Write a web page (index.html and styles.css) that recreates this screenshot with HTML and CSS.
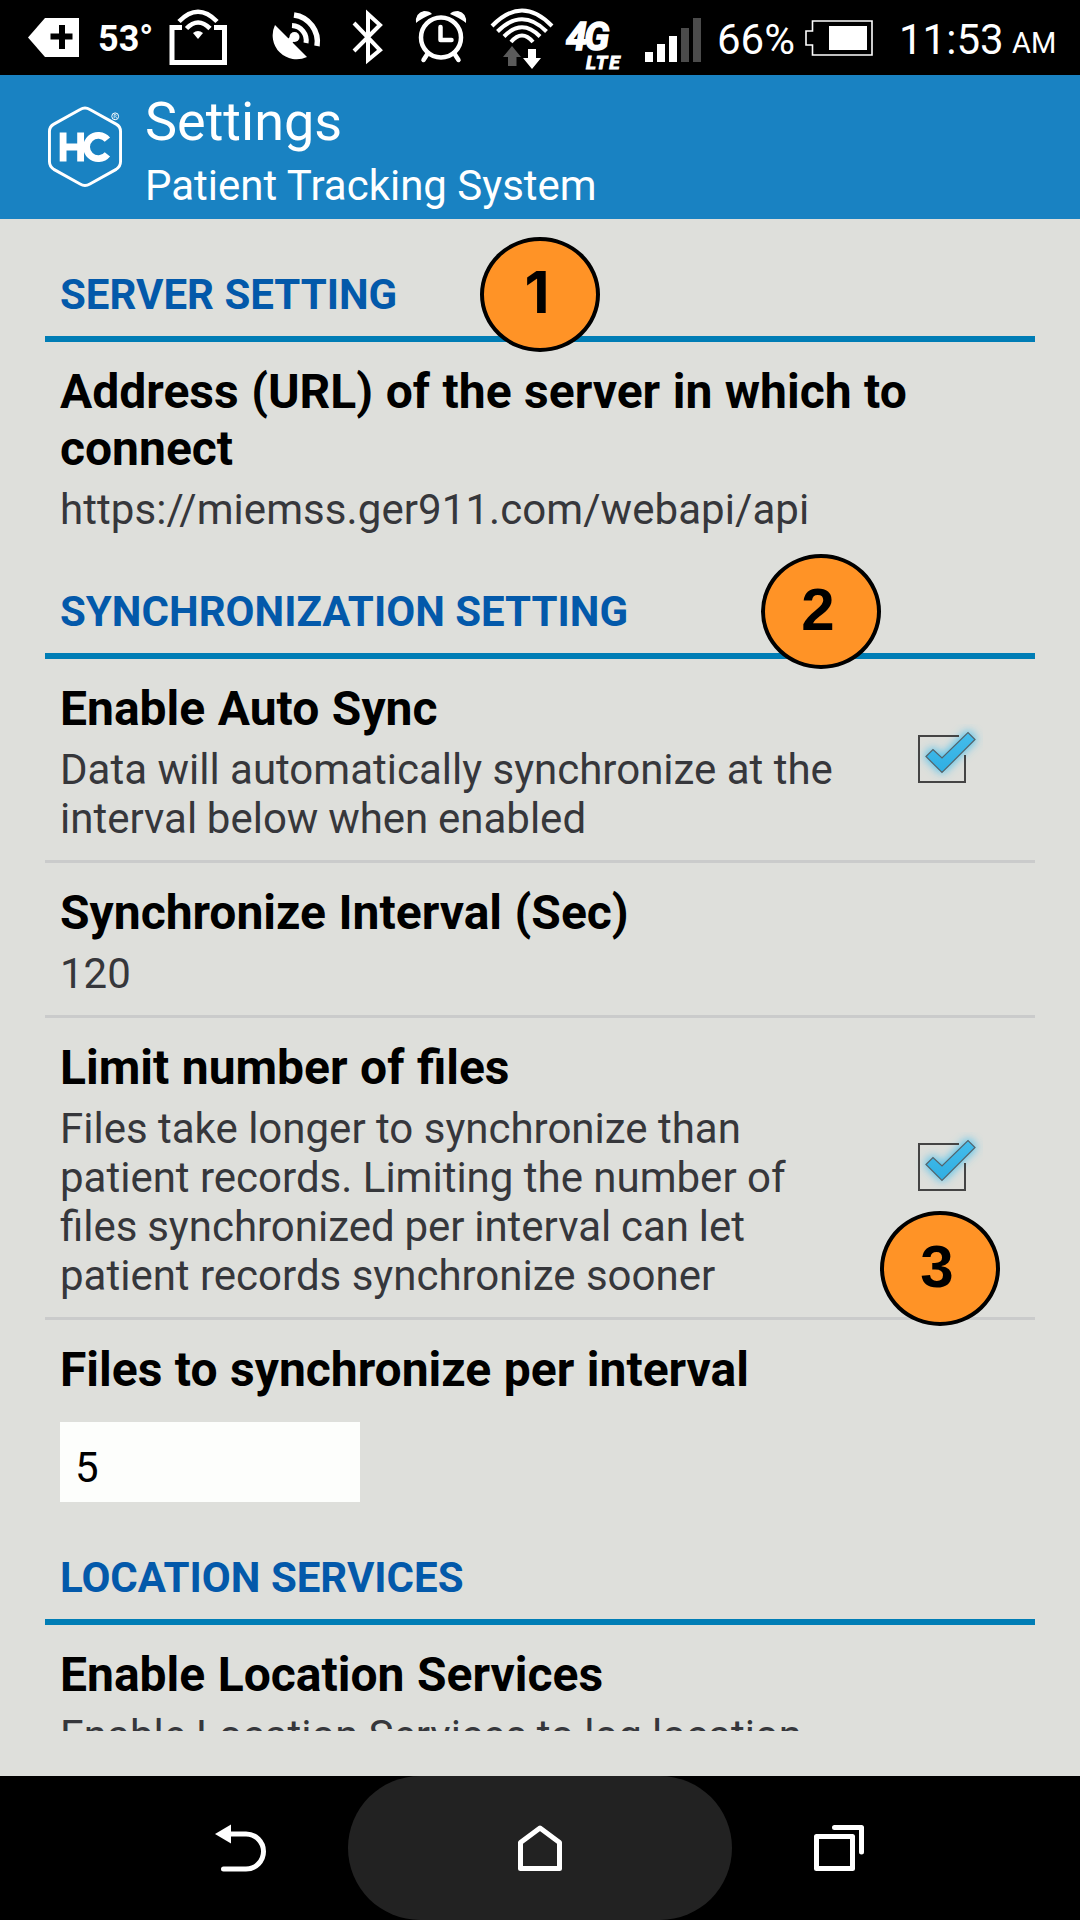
FILE: index.html
```html
<!DOCTYPE html>
<html lang="en">
<head>
<meta charset="utf-8">
<title>Settings</title>
<link rel="stylesheet" href="styles.css">
</head>
<body>
<div class="screen">
  <header class="status">
    <svg class="i-back" width="51" height="39" viewBox="0 0 51 39"><path d="M0 19.500 17 0H51V39H17Z" fill="#fff"/><path d="M34 7v24M22.500 18.500h22" stroke="#000" stroke-width="6"/></svg>
    <span class="temp">53°</span>
    <svg class="i-cast" width="60" height="60" viewBox="0 0 60 60" fill="none" stroke="#fff"><path d="M14 20.500H4V55.500H56.500V20.500H46" stroke-width="5"/><path d="M11 14.500Q30 -5 49 14.500M18.500 21.500Q30 9.500 42 21.500" stroke-width="4.600"/><path d="M25 26Q30 22 35 26L30 32Z" fill="#fff" stroke="none"/></svg>
    <svg class="i-sat" width="50" height="50" viewBox="0 0 50 50" fill="none" stroke="#fff"><path d="M3 14 35 46A24 24 0 0 1 3 14Z" fill="#fff" stroke="none"/><path d="M17 31 22 26" stroke-width="6"/><circle cx="22.500" cy="26" r="5" fill="#fff" stroke="none"/><path d="M20 14.500A15 15 0 0 1 34 32" stroke-width="5"/><path d="M22 4A27 27 0 0 1 45 35" stroke-width="5.500"/></svg>
    <svg class="i-bt" width="32" height="56" viewBox="0 0 32 56" fill="none" stroke="#fff" stroke-width="4"><path d="M2 14 28 41 16 51V5L28 16 2 42"/></svg>
    <svg class="i-alarm" width="52" height="54" viewBox="0 0 52 54" fill="none" stroke="#fff"><circle cx="26" cy="27.500" r="20" stroke-width="4.500"/><path d="M25.500 17v13h11" stroke-width="4.500" stroke-linecap="round" stroke-linejoin="round"/><path d="M13 43 8.500 50M39 43 43.500 50" stroke-width="4.500" stroke-linecap="round"/><path d="M1 13Q0 3 9 1Q15 1 17 4Q7 8 1 13ZM51 13Q52 3 43 1Q37 1 35 4Q45 8 51 13Z" fill="#fff" stroke="none"/></svg>
    <svg class="i-wifi" width="64" height="62" viewBox="0 0 64 62" fill="none" stroke="#fff" stroke-width="4"><path d="M2 18Q32 -13 62 18M7.500 23.500Q32 -1 56.500 23.500M14 28.500Q32 10 50 28.500M21 34Q32 21 43 34"/><path d="M22 38 31 49H26.500V58H18V49H13Z" fill="#5a5a5a" stroke="none"/><path d="M38 41h8v9h5L42 61 33 50h5Z" fill="#fff" stroke="none"/></svg>
    <div class="net"><span class="g4">4G</span><span class="lte">LTE</span></div>
    <svg class="i-signal" width="56" height="44" viewBox="0 0 56 44" fill="#fff"><path d="M0 34h8v10H0zM12 26h8v18h-8zM24 18h8v26h-8z"/><path d="M36 10h8v34h-8zM48 0h8v44h-8z" fill="#4b4b4b"/></svg>
    <span class="pct">66%</span>
    <svg class="i-batt" width="68" height="36" viewBox="0 0 68 36"><path d="M7.500 1H67V35H7.500V25H1V11H7.500Z" fill="none" stroke="#fff" stroke-width="1.600"/><path d="M24 6h38v24H24z" fill="#fff"/></svg>
    <span class="time">11:53</span><span class="ampm">AM</span>
  </header>

  <div class="appbar">
    <div class="logo">
      <svg width="74" height="82" viewBox="0 0 76 84" fill="none" stroke="#fff" stroke-width="3"><path d="M33 3.500Q38 .500 43 3.500L70 18.500Q74.500 21 74.500 26V57Q74.500 62 70 65L43 80Q38 83 33 80L6 65Q1.500 62 1.500 57V26Q1.500 21 6 18.500Z"/><circle cx="69" cy="10.500" r="3.500" stroke-width="1"/><path d="M68 12.500v-4h1.500q1 1 0 2l1 2" stroke-width=".8"/><path d="M15.500 27V57M33.500 27V57M16 42H34" stroke-width="7"/><path d="M61 34.500A12 12 0 1 0 61 49.500" stroke-width="7"/></svg>
    </div>
    <div class="heads"><h1>Settings</h1><p>Patient Tracking System</p></div>
  </div>

  <main class="content">
    <section>
      <h2>SERVER SETTING<span class="pin pin1"><b>1</b></span></h2>
      <div class="pref server"><h3>Address (URL) of the server in which to connect</h3><p class="url">https://miemss.ger911.com/webapi/api</p></div>
    </section>
    <section>
      <h2>SYNCHRONIZATION SETTING<span class="pin pin2"><b>2</b></span></h2>
      <div class="pref auto row">
        <div class="copy"><h3>Enable Auto Sync</h3><p>Data will automatically synchronize at the<br><span class="tight">interval below when enabled</span></p></div>
        <svg class="check" width="72" height="72" viewBox="0 0 72 72"><defs><filter id="glow" x="-60%" y="-60%" width="220%" height="220%"><feGaussianBlur stdDeviation="5"/></filter><linearGradient id="blue" x2="0" y2="1"><stop stop-color="#45bdec"/><stop offset="1" stop-color="#2faee2"/></linearGradient></defs><path d="M15 32 22 25 31 34 57 8 64 15 31 48Z" fill="#45c0ee" stroke="#45c0ee" stroke-width="3" filter="url(#glow)"/><path d="M48 12H8V58H54V31" fill="none" stroke="#444" stroke-width="2"/><path d="M15 32.500 22 25.500 31 34 57 8.500 64 15.500 31 48.500Z" fill="url(#blue)" stroke="#55636a" stroke-width="1.200"/></svg>
      </div>
      <div class="pref interval"><h3>Synchronize Interval (Sec)</h3><p>120</p></div>
      <div class="pref limit row">
        <div class="copy"><h3>Limit number of files</h3><p>Files take longer to synchronize than<br>patient records. Limiting the number of<br><span class="tight">files synchronized per interval can let</span><br>patient records synchronize sooner</p></div>
        <svg class="check" width="72" height="72" viewBox="0 0 72 72"><path d="M15 32 22 25 31 34 57 8 64 15 31 48Z" fill="#45c0ee" stroke="#45c0ee" stroke-width="3" filter="url(#glow)"/><path d="M48 12H8V58H54V31" fill="none" stroke="#444" stroke-width="2"/><path d="M15 32.500 22 25.500 31 34 57 8.500 64 15.500 31 48.500Z" fill="url(#blue)" stroke="#55636a" stroke-width="1.200"/></svg>
        <span class="pin pin3"><b>3</b></span>
      </div>
      <div class="pref files"><h3>Files to synchronize per interval</h3><div class="field">5</div></div>
    </section>
    <section>
      <h2>LOCATION SERVICES</h2>
      <div class="pref location"><h3>Enable Location Services</h3><p>Enable Location Services to log location</p></div>
    </section>
  </main>

  <nav class="nav">
    <div class="key back"><svg width="52" height="48" viewBox="0 0 52 48" fill="none" stroke="#fff" stroke-width="5" stroke-linecap="round"><path d="M14 10H31A17.500 17.500 0 0 1 31 45H8.500"/><path d="M0 10 16 .500V19.500Z" fill="#fff" stroke="none"/></svg></div>
    <div class="key home"><svg width="44" height="48" viewBox="0 0 44 48" fill="none" stroke="#fff" stroke-width="5" stroke-linejoin="round"><path d="M2.500 18.500 22 4 41.500 18.500V44.500H2.500Z"/></svg></div>
    <div class="key recent"><svg width="50" height="48" viewBox="0 0 50 48" fill="none" stroke="#fff" stroke-width="5" stroke-linejoin="round" stroke-linecap="round"><path d="M2.500 12.500H38.500V44.500H2.500ZM20.500 3.500H47.500V28"/></svg></div>
  </nav>
</div>
</body>
</html>
```
FILE: styles.css
```css
* { box-sizing: border-box; margin: 0; padding: 0; }
body { background: #000; font-family: Roboto, sans-serif; }
svg { display: block; flex: none; }
.screen { width: 1080px; height: 1920px; display: flex; flex-direction: column; overflow: hidden; }

.status { height: 75px; flex: none; display: flex; align-items: flex-start; background: #000; color: #fff; white-space: nowrap; }
.status > * { flex: none; }
.i-back { margin: 18px 0 0 28px; }
.temp { width: 70px; margin: 16px 0 0 19px; font-weight: 700; font-size: 36px; line-height: 46px; }
.i-cast { margin-top: 7px; }
.i-sat { margin: 11px 0 0 44px; }
.i-bt { margin: 9px 0 0 30px; }
.i-alarm { margin: 10px 0 0 31px; }
.i-wifi { margin: 8px 0 0 23px; }
.net { width: 62px; margin: 20px 0 0 12px; display: flex; flex-direction: column; font-weight: 700; font-style: italic; -webkit-text-stroke: 1.5px #fff; }
.g4 { font-size: 38px; line-height: 35px; letter-spacing: -3px; }
.lte { margin: -2px 0 0 20px; font-size: 19px; line-height: 19px; letter-spacing: 2px; -webkit-text-stroke-width: 1px; }
.i-signal { margin: 18px 0 0 17px; }
.pct { width: 88px; margin: 15px 0 0 16px; font-size: 42px; line-height: 50px; }
.i-batt { margin-top: 20px; }
.time { width: 113px; margin: 15px 0 0 26px; font-size: 42px; line-height: 50px; }
.ampm { margin-top: 25px; font-size: 29px; line-height: 36px; }

.appbar { height: 144px; flex: none; display: flex; background: #1982c2; color: #fff; }
.logo { margin: 31px 23px 0 48px; }
.heads h1 { font-weight: 400; font-size: 54px; line-height: 64px; margin-top: 15px; }
.heads p { font-size: 42px; line-height: 50px; margin-top: 7px; }

.content { height: 1557px; flex: none; padding: 0 45px; background: #dedfdb; overflow: hidden; }
h2 { position: relative; height: 123px; padding: 51px 15px 0; border-bottom: 6px solid #007db5; color: #0359aa; font-size: 42px; line-height: 49px; font-weight: 700; }
.pref { padding: 21px 15px 0; }
.pref h3 { font-size: 48px; line-height: 57px; font-weight: 700; color: #000; word-spacing: .6px; }
.pref p { margin-top: 8px; font-size: 42px; line-height: 49px; color: #36373b; white-space: nowrap; }
.pref .url { letter-spacing: .07px; }
.tight { word-spacing: -.7px; }
.server { height: 194px; }
.row { display: flex; position: relative; }
.copy { width: 802px; flex: none; }
.auto { height: 204px; border-bottom: 3px solid #cacbcb; }
.interval { height: 155px; border-bottom: 3px solid #cacbcb; }
.limit { height: 302px; border-bottom: 3px solid #cacbcb; }
.check { margin: 44px 0 0 49px; }
.limit .check { margin-top: 93px; }
.files { height: 182px; }
.field { width: 300px; height: 80px; margin-top: 24px; padding: 21px 15px 0; background: #fdfefc; color: #000; font-size: 42px; line-height: 49px; }
.location { height: 106px; overflow: hidden; }
.location p { word-spacing: -.4px; }

/* Numbered callouts sit over the list */
.pin { position: absolute; z-index: 1; width: 120px; height: 115px; border: 4px solid #000; border-radius: 50%; background: #ff9326; color: #000; text-align: center; }
.pin b { display: block; margin: 17px 6px 0 0; font: 700 60px/69px "Liberation Sans", Arial, sans-serif; }
.pin1 b { font-family: Inter, sans-serif; font-size: 58px; }
.pin1 { left: 435px; top: 18px; }
.pin2 { left: 716px; top: 18px; }
.pin3 { left: 835px; top: 193px; }

.nav { height: 144px; flex: none; display: flex; justify-content: center; background: #000; }
.key { width: 214px; display: flex; justify-content: center; padding-top: 48px; }
.home { width: 384px; background: #222; border-radius: 72px; }
```
